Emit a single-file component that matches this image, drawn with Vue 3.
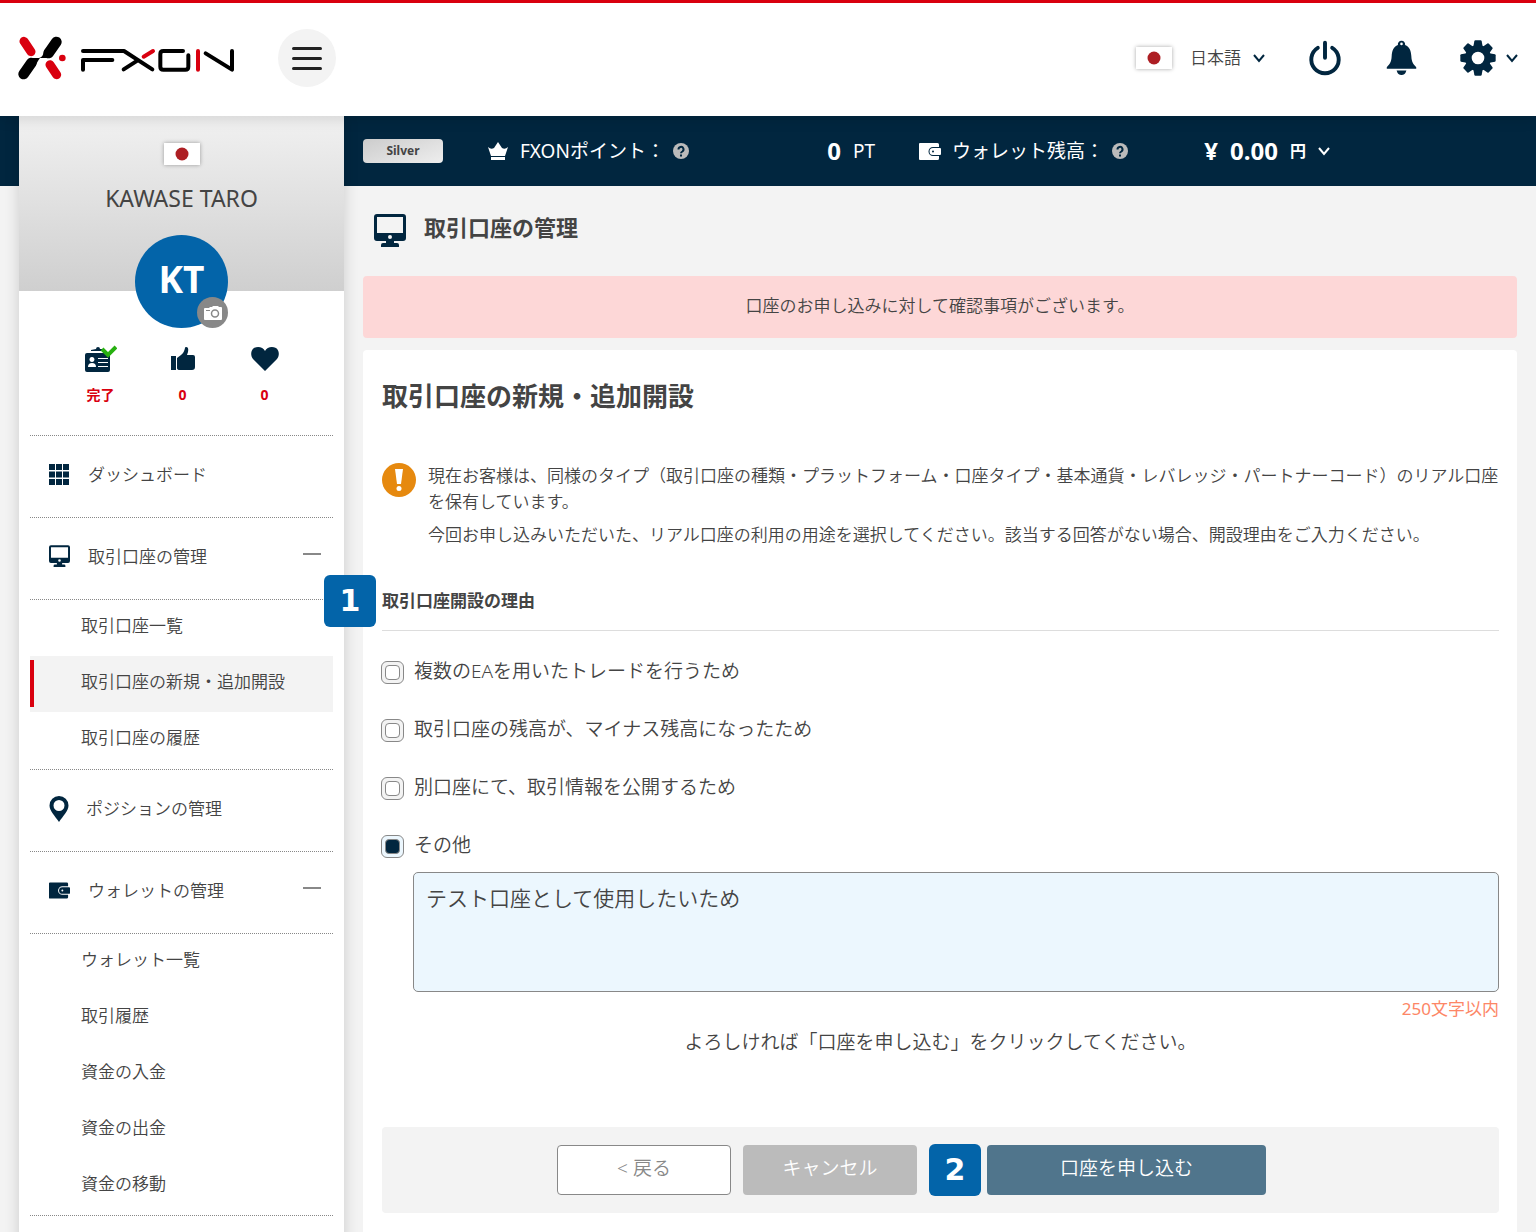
<script setup>
import { ref } from 'vue'

const reasons = [
  '複数のEAを用いたトレードを行うため',
  '取引口座の残高が、マイナス残高になったため',
  '別口座にて、取引情報を公開するため',
  'その他',
]
const reason = ref(3)
const detail = ref('テスト口座として使用したいため')

const menu = [
  { icon: 'grid', label: 'ダッシュボード' },
  {
    icon: 'monitor',
    label: '取引口座の管理',
    children: [
      { label: '取引口座一覧' },
      { label: '取引口座の新規・追加開設', active: true },
      { label: '取引口座の履歴' },
    ],
  },
  { icon: 'pin', label: 'ポジションの管理' },
  {
    icon: 'wallet',
    label: 'ウォレットの管理',
    children: [
      { label: 'ウォレット一覧' },
      { label: '取引履歴' },
      { label: '資金の入金' },
      { label: '資金の出金' },
      { label: '資金の移動' },
    ],
  },
]
const teeth = [0, 45, 90, 135, 180, 225, 270, 315]
</script>

<template>
  <svg class="defs" aria-hidden="true">
    <symbol id="monitor" viewBox="0 0 32 34">
      <path fill-rule="evenodd" d="M3 0h26a3 3 0 0 1 3 3v21a3 3 0 0 1-3 3h-9v2h3a2 2 0 0 1 2 2v2H7v-2a2 2 0 0 1 2-2h3v-2H3a3 3 0 0 1-3-3V3a3 3 0 0 1 3-3zM3 3v16h26V3zM16 21a2 2 0 1 0 0 4 2 2 0 0 0 0-4z" />
    </symbol>
    <symbol id="grid" viewBox="0 0 20 21">
      <path d="M0 0h6v6H0zM7 0h6v6H7zM14 0h6v6h-6zM0 7.500h6v6H0zM7 7.500h6v6H7zM14 7.500h6v6h-6zM0 15h6v6H0zM7 15h6v6H7zM14 15h6v6h-6z" />
    </symbol>
    <symbol id="pin" viewBox="0 0 20 26">
      <path fill-rule="evenodd" d="M10 0a9.500 9.500 0 0 1 9.500 9.500C19.500 15 14 20 10 26 6 20 .5 15 .5 9.500A9.500 9.500 0 0 1 10 0zM10 4a5.500 5.500 0 1 0 0 11 5.500 5.500 0 0 0 0-11z" />
    </symbol>
    <symbol id="wallet" viewBox="0 0 22 17">
      <path d="M1 0h17.500a1.500 1.500 0 0 1 1.500 1.500V4h-6a4.500 4.500 0 0 0 0 9h6v2.500a1.500 1.500 0 0 1-1.500 1.500H1a1 1 0 0 1-1-1V1a1 1 0 0 1 1-1z" />
      <path fill-rule="evenodd" d="M14 5h7a1 1 0 0 1 1 1v5a1 1 0 0 1-1 1h-7a3.500 3.500 0 0 1 0-7zM14 7.500a1 1 0 1 0 0 2 1 1 0 0 0 0-2z" />
    </symbol>
    <symbol id="chevron" viewBox="0 0 12 10">
      <path d="M1 2l5 6 5-6" fill="none" stroke="currentColor" stroke-width="2" />
    </symbol>
    <symbol id="help" viewBox="0 0 16 16">
      <circle cx="8" cy="8" r="8" />
      <path d="M5.500 6.500a2.500 2.500 0 1 1 3.800 2C8.400 9 8 9.300 8 10.300M8 11.500v2" fill="none" stroke="#01263f" stroke-width="2" />
    </symbol>
    <symbol id="flag" viewBox="0 0 36 22">
      <path d="M0 0h36v22H0z" fill="#fff" />
      <circle cx="18" cy="11" r="6.500" fill="#ad1e23" />
    </symbol>
  </svg>

  <header class="header">
    <a class="logo" href="#" aria-label="FXON">
      <svg viewBox="54 105 654 138" width="218" height="46" fill="none" stroke-linecap="round" stroke-linejoin="round">
        <g stroke="#d9000f" stroke-width="27">
          <path d="M72 124l21 31M150 194l20 30" />
        </g>
        <circle cx="187" cy="174" r="10" fill="#d9000f" />
        <path d="M169 126l-23 33M71 222l23-33" stroke="#000" stroke-width="32" />
        <path d="M117 174q12-2 17-25l24 19q-7 6-20 6H120q-5 6-14 24l-24-17q6-7 17-7z" fill="#000" />
        <g stroke="#000" stroke-width="12">
          <path d="M249 209V180H337M249 153H372L457 208M371 208l41-26" />
          <path d="M549 153H490q-9 0-9 9v38q0 9 9 9h66q9 0 9-9V166" />
          <path d="M617 160l79 49V153" />
        </g>
        <path d="M431 170l28-17M594 153v56" stroke="#d9000f" stroke-width="12" />
      </svg>
    </a>
    <button class="burger" type="button" aria-label="メニュー"><i></i><i></i><i></i></button>
    <div class="tools">
      <button class="lang" type="button">
        <svg class="flag" width="36" height="22"><use href="#flag" /></svg>
        <span>日本語</span>
        <svg width="12" height="10"><use href="#chevron" /></svg>
      </button>
      <button class="power" type="button" aria-label="ログアウト">
        <svg viewBox="561 60 104 110" width="34" height="36" fill="none" stroke="#01263f" stroke-width="12" stroke-linecap="round">
          <path d="M591 84a42 42 0 1 0 44 0M613 68v46" />
        </svg>
      </button>
      <button class="bell" type="button" aria-label="お知らせ">
        <svg viewBox="796 60 94 110" width="31" height="36" fill="#01263f">
          <path fill-rule="evenodd" d="M843 62a11 11 0 0 1 11 13c14 6 18 18 19 34 1 20 6 24 15 34v5H798v-5c9-10 14-14 15-34 1-16 5-28 19-34a11 11 0 0 1 11-13zm0 6a4 4 0 1 0 0 8 4 4 0 0 0 0-8zM828 153h30q-4 14-15 14t-15-14z" />
        </svg>
      </button>
      <button class="gear" type="button" aria-label="設定">
        <svg viewBox="-54 -54 108 108" width="36" height="36" fill="#01263f">
          <path v-for="t in teeth" :key="t" :transform="`rotate(${t})`" d="M-14-34l3-17q1-2 3-2H8q2 0 3 2l3 17z" />
          <circle r="29" fill="none" stroke="#01263f" stroke-width="20" />
        </svg>
        <svg width="12" height="10"><use href="#chevron" /></svg>
      </button>
    </div>
  </header>

  <div class="layout">
    <aside class="sidebar">
      <div class="profile">
        <svg class="flag" width="36" height="22"><use href="#flag" /></svg>
        <p class="name">KAWASE TARO</p>
        <div class="avatar">
          KT
          <button class="camera" type="button" aria-label="写真を変更">
            <svg viewBox="0 0 18 14" width="18" height="14">
              <path d="M1 2h4l1-1h2l1-1h5l1 1h2a1 1 0 0 1 1 1v11a1 1 0 0 1-1 1H1a1 1 0 0 1-1-1V3a1 1 0 0 1 1-1z" fill="#fff" />
              <circle cx="11" cy="7.500" r="3.500" fill="none" stroke="#888" stroke-width="1.500" />
              <path d="M2 4.500h4" stroke="#888" />
            </svg>
          </button>
        </div>
      </div>
      <ul class="stats">
        <li>
          <svg viewBox="0 0 32 28" width="32" height="28">
            <path fill="#01263f" d="M2 8h21a2 2 0 0 1 2 2v15a2 2 0 0 1-2 2H2a2 2 0 0 1-2-2V10a2 2 0 0 1 2-2zM6 5l5-1a2 2 0 0 1 4 0h4v2H6z" />
            <path fill="#fff" d="M7 12a2.500 2.500 0 1 1-.1 0zM3 22q0-4 4-4t4 4zM13 13h10v1H13zM13 17h10v1H13zM13 21h10v1H13z" />
            <path d="M17 4l6 6 8-8" fill="none" stroke="#27b010" stroke-width="4" />
          </svg>
          <b>完了</b>
        </li>
        <li>
          <svg viewBox="0 0 24 24" width="24" height="28" fill="#01263f">
            <path d="M0 9h5v14H0zM6 11l4-3q3-2 4-7 0-1 1-1 3 0 2 5l-1 3h6q2 0 2 2v10q0 3-3 3H9q-3 0-3-2z" />
          </svg>
          <b>0</b>
        </li>
        <li>
          <svg viewBox="0 0 28 24" width="28" height="28" fill="#01263f">
            <path d="M14 24L2 12C-1 8 0 3 3 1c4-2 9-1 11 3 2-4 7-5 11-3 3 2 4 7 1 11z" />
          </svg>
          <b>0</b>
        </li>
      </ul>
      <nav class="menu">
        <section v-for="item in menu" :key="item.label">
          <a class="entry" href="#">
            <svg :class="['ico', item.icon]"><use :href="'#' + item.icon" /></svg>
            <span>{{ item.label }}</span>
            <i v-if="item.children" class="minus"></i>
          </a>
          <ul v-if="item.children" class="sub">
            <li v-for="child in item.children" :key="child.label" :class="{ active: child.active }">
              <a href="#">{{ child.label }}</a>
            </li>
          </ul>
        </section>
      </nav>
    </aside>

    <main class="main">
      <div class="statusbar">
        <span class="rank">Silver</span>
        <div class="points">
          <svg viewBox="0 0 20 18" width="22" height="18">
            <path d="M3 14L0 5q3 3 6 1l4-6 4 6q3 2 6-1l-3 9zM3 15h14v3H3z" fill="#fff" />
          </svg>
          <span class="caption">FXONポイント：</span>
          <svg class="help" width="16" height="16"><use href="#help" /></svg>
          <span class="value"><b>0</b> PT</span>
        </div>
        <div class="balance">
          <svg width="22" height="17"><use href="#wallet" /></svg>
          <span class="caption">ウォレット残高：</span>
          <svg class="help" width="16" height="16"><use href="#help" /></svg>
          <button class="value" type="button">
            <b class="yen">¥</b><b>0.00</b><b class="unit">円</b>
            <svg width="12" height="10"><use href="#chevron" /></svg>
          </button>
        </div>
      </div>

      <div class="pagehead">
        <svg width="32" height="34"><use href="#monitor" /></svg>
        <h1>取引口座の管理</h1>
      </div>

      <p class="alert">口座のお申し込みに対して確認事項がございます。</p>

      <form class="card" @submit.prevent>
        <h2>取引口座の新規・追加開設</h2>
        <div class="notice">
          <svg viewBox="0 0 34 34" width="34" height="34">
            <circle cx="17" cy="17" r="17" fill="#e6890f" />
            <path d="M13 6h8l-2 15h-4z" fill="#fff" />
            <circle cx="17" cy="25.500" r="2.500" fill="#fff" />
          </svg>
          <div>
            <p>現在お客様は、同様のタイプ（取引口座の種類・プラットフォーム・口座タイプ・基本通貨・レバレッジ・パートナーコード）のリアル口座を保有しています。</p>
            <p>今回お申し込みいただいた、リアル口座の利用の用途を選択してください。該当する回答がない場合、開設理由をご入力ください。</p>
          </div>
        </div>

        <h3><span class="step">1</span>取引口座開設の理由</h3>
        <div class="options">
          <label v-for="(text, i) in reasons" :key="text">
            <input v-model="reason" type="radio" name="reason" :value="i" />
            <span>{{ text }}</span>
          </label>
        </div>
        <textarea v-model="detail" aria-label="開設理由" maxlength="250"></textarea>
        <p class="limit">250文字以内</p>
        <p class="prompt">よろしければ「口座を申し込む」をクリックしてください。</p>
        <div class="actions">
          <button class="back" type="button">&lt; 戻る</button>
          <button class="cancel" type="button">キャンセル</button>
          <div class="final">
            <span class="step">2</span>
            <button class="apply" type="submit">口座を申し込む</button>
          </div>
        </div>
      </form>
    </main>
  </div>
</template>

<style>
body {
  background: #f3f3f3;
  overflow-x: hidden;
}
#app {
  font-family: "Noto Sans", "Noto Sans CJK JP", sans-serif;
  font-size: 17px;
  font-weight: 350;
  line-height: 26px;
  color: #444;
}
</style>

<style scoped>
* {
  box-sizing: border-box;
}
h1,
h2,
h3,
p,
ul {
  margin: 0;
  padding: 0;
}
ul {
  list-style: none;
}
b {
  font-weight: 700;
}
a {
  color: inherit;
  text-decoration: none;
}
button,
textarea {
  font: inherit;
  color: inherit;
  margin: 0;
}
button {
  padding: 0;
  border: 0;
  background: none;
  cursor: pointer;
}
svg {
  display: block;
  flex: none;
}
.defs {
  position: absolute;
  width: 0;
  height: 0;
}
.header {
  position: relative;
  z-index: 3;
  display: flex;
  align-items: center;
  height: 116px;
  padding: 0 18px 3px;
  background: #fff;
  border-top: 3px solid #d9000f;
  box-shadow: 0 2px 14px rgba(0, 0, 0, 0.14);
}
.burger {
  display: flex;
  flex-direction: column;
  align-items: center;
  justify-content: center;
  gap: 7px;
  width: 58px;
  height: 58px;
  margin-left: 42px;
  border-radius: 50%;
  background: #f3f3f3;
}
.burger i {
  width: 30px;
  height: 3px;
  border-radius: 2px;
  background: #222;
}
.tools {
  display: flex;
  align-items: center;
  margin-left: auto;
  color: #01263f;
}
.lang {
  display: flex;
  align-items: center;
  margin-right: 43px;
}
.lang span {
  margin: 0 12px 0 18px;
  color: #444;
}
.flag {
  box-shadow: 0 0 4px rgba(0, 0, 0, 0.35);
}
.bell {
  margin: 0 43px 0 44px;
}
.gear {
  display: flex;
  align-items: center;
  gap: 10px;
}
.layout {
  display: flex;
  padding: 0 19px;
  background: linear-gradient(#01263f, #01263f) 0 0 / 100% 70px no-repeat;
}
.sidebar {
  flex: none;
  width: 325px;
  padding-bottom: 40px;
  background: #fff;
  box-shadow: 0 0 14px rgba(0, 0, 0, 0.16);
}
.profile {
  display: flex;
  flex-direction: column;
  align-items: center;
  height: 175px;
  padding-top: 27px;
  background: linear-gradient(#f1f1f1, #cfcfcf);
}
.name {
  margin: 18px 0 22px;
  font-size: 23px;
  font-weight: 400;
  line-height: 30px;
}
.avatar {
  position: relative;
  flex: none;
  display: flex;
  align-items: center;
  justify-content: center;
  width: 93px;
  height: 93px;
  padding-bottom: 6px;
  border-radius: 50%;
  background: #0364a9;
  color: #fff;
  font-family: "Open Sans", "Noto Sans", sans-serif;
  font-size: 37px;
  font-weight: 700;
}
.camera {
  position: absolute;
  right: 0;
  bottom: 0;
  display: flex;
  align-items: center;
  justify-content: center;
  width: 31px;
  height: 31px;
  border-radius: 50%;
  background: #888;
}
.stats {
  display: flex;
  justify-content: center;
  height: 144px;
  padding: 54px 0 0 2px;
}
.stats li {
  display: flex;
  flex-direction: column;
  align-items: center;
  gap: 9px;
  width: 82px;
  color: #d9000f;
  font-size: 14px;
}
.menu {
  margin: 0 11px;
  border-bottom: 1px dotted #888;
}
.entry {
  display: flex;
  align-items: center;
  height: 82px;
  padding: 0 12px 4px 19px;
  border-top: 1px dotted #888;
  color: #444;
}
.ico {
  width: 20px;
  height: 26px;
  margin-right: 19px;
  fill: #01263f;
}
.ico.grid {
  height: 21px;
}
.ico.pin {
  margin-right: 17px;
}
.ico.monitor {
  width: 21px;
  height: 23px;
  margin-right: 18px;
}
.ico.wallet {
  width: 21px;
  height: 17px;
  margin-right: 18px;
}
.minus {
  width: 18px;
  height: 2px;
  margin: 0 0 5px auto;
  background: #888;
}
.sub {
  padding-bottom: 1px;
  border-top: 1px dotted #888;
}
.sub a {
  display: flex;
  align-items: center;
  height: 56px;
  padding: 0 0 4px 51px;
}
.sub .active {
  position: relative;
  background: #f3f3f3;
}
.sub .active::before {
  content: "";
  position: absolute;
  top: 4px;
  bottom: 5px;
  left: 0;
  width: 4px;
  background: #d9000f;
}
.main {
  flex: 1;
  min-width: 0;
  padding-left: 19px;
}
.statusbar {
  display: flex;
  align-items: center;
  height: 70px;
  color: #fff;
  font-size: 19px;
  font-weight: 400;
  white-space: nowrap;
}
.rank {
  width: 80px;
  margin-right: 44px;
  border-radius: 4px;
  background: linear-gradient(160deg, #ccc, #eee);
  color: #444;
  font-size: 12px;
  font-weight: 700;
  line-height: 24px;
  text-align: center;
}
.points,
.balance {
  display: flex;
  align-items: center;
}
.points {
  width: 388px;
  margin-right: 44px;
}
.balance {
  width: 411px;
  fill: #fff;
}
.caption {
  margin-left: 11px;
}
.help {
  margin-left: 8px;
  fill: #bbb;
}
.value {
  display: flex;
  align-items: center;
  gap: 12px;
  margin-left: auto;
}
.value b {
  font-size: 24px;
}
.value .unit {
  font-size: 16px;
}
.pagehead {
  display: flex;
  align-items: center;
  gap: 18px;
  height: 90px;
  padding-left: 11px;
  fill: #01263f;
}
h1 {
  padding-bottom: 8px;
  font-size: 22px;
}
.alert {
  padding: 17px 0 19px;
  border-radius: 4px;
  background: #fdd7d7;
  text-align: center;
}
.card {
  margin-top: 12px;
  padding: 30px 18px 40px 19px;
  border-radius: 4px 4px 0 0;
  background: #fff;
}
h2 {
  font-size: 26px;
  line-height: 32px;
}
.notice {
  display: flex;
  gap: 12px;
  padding-top: 51px;
  margin-right: -4px;
}
.notice p + p {
  margin-top: 7px;
}
h3 {
  position: relative;
  margin: 40px 0 27px;
  padding-bottom: 16px;
  border-bottom: 1px solid #ddd;
  font-size: 17px;
}
.step {
  flex: none;
  width: 52px;
  border-radius: 6px;
  background: #0364a9;
  color: #fff;
  font: 700 30px/52px "DejaVu Sans", sans-serif;
  text-align: center;
}
h3 .step {
  position: absolute;
  top: -13px;
  left: -58px;
}
.options {
  display: grid;
  gap: 30px;
  margin-left: -1px;
}
.options label {
  display: flex;
  align-items: center;
  gap: 10px;
  font-size: 19px;
}
.options span {
  padding-bottom: 2px;
}
.options input {
  appearance: none;
  display: grid;
  place-items: center;
  width: 23px;
  height: 23px;
  margin: 0;
  border: 1px solid #888;
  border-radius: 6px;
  background: #f3f3f3;
}
.options input::before {
  content: "";
  width: 15px;
  height: 15px;
  box-sizing: border-box;
  border: 1px solid #888;
  border-radius: 4px;
  background: #fff;
}
.options input:checked {
  background: #ecf7fe;
}
.options input:checked::before {
  background: #01263f;
}
textarea {
  display: block;
  width: calc(100% - 31px);
  height: 120px;
  margin: 12px 0 0 31px;
  padding: 11px 12px;
  border: 1px solid #888;
  border-radius: 5px;
  background: #ecf7fe;
  font-size: 21px;
  line-height: 28px;
  resize: none;
}
.limit {
  margin-top: 4px;
  color: #fd8666;
  font-weight: 400;
  text-align: right;
}
.prompt {
  margin-top: 7px;
  font-size: 19px;
  text-align: center;
}
.actions {
  display: flex;
  align-items: center;
  justify-content: center;
  gap: 12px;
  margin-top: 72px;
  padding: 17px 58px 17px 0;
  border-radius: 4px;
  background: #f3f3f3;
  font-size: 19px;
}
.actions button {
  width: 174px;
  height: 50px;
  padding-bottom: 4px;
  border-radius: 4px;
}
.final {
  display: flex;
  align-items: center;
  gap: 6px;
}
.actions .back {
  border: 1px solid #888;
  background: #fff;
  color: #888;
}
.actions .cancel {
  background: #bbb;
  color: #fff;
}
.actions .apply {
  width: 279px;
  background: #50758c;
  color: #fff;
}
</style>
